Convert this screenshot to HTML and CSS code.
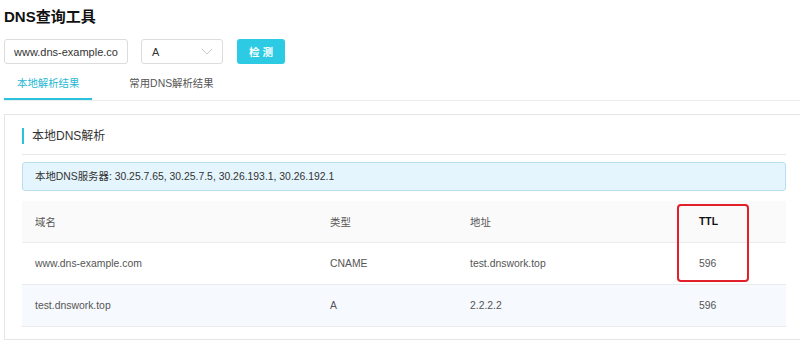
FILE: index.html
```html
<!DOCTYPE html>
<html lang="zh-CN">
<head>
    <meta charset="UTF-8">
    <meta name="viewport" content="width=device-width, initial-scale=1.0">
    <title>DNS查询工具</title>
    <link rel="stylesheet" href="styles.css">
</head>
<body>
    <div class="page">
        <h1 class="title">DNS查询工具</h1>

        <div class="query-bar">
            <input class="domain-input" type="text" value="www.dns-example.com">
            <div class="type-select">
                <span>A</span>
                <svg class="chevron" width="12" height="7" viewBox="0 0 12 7">
                    <path d="M1 1 L6 6 L11 1" fill="none" stroke="#c8c8c8" stroke-width="1"/>
                </svg>
            </div>
            <button class="check-button">检 测</button>
        </div>

        <div class="tabs">
            <div class="tab active">本地解析结果</div>
            <div class="tab">常用DNS解析结果</div>
        </div>

        <div class="card">
            <div class="card-title">本地DNS解析</div>
            <div class="alert">本地DNS服务器: 30.25.7.65, 30.25.7.5, 30.26.193.1, 30.26.192.1</div>

            <div class="table-wrap">
                <table class="result-table">
                    <colgroup>
                        <col class="col-domain">
                        <col class="col-type">
                        <col class="col-addr">
                        <col>
                    </colgroup>
                    <thead>
                        <tr>
                            <th>域名</th>
                            <th>类型</th>
                            <th>地址</th>
                            <th class="ttl-head">TTL</th>
                        </tr>
                    </thead>
                    <tbody>
                        <tr>
                            <td>www.dns-example.com</td>
                            <td>CNAME</td>
                            <td>test.dnswork.top</td>
                            <td>596</td>
                        </tr>
                        <tr class="hover">
                            <td>test.dnswork.top</td>
                            <td>A</td>
                            <td>2.2.2.2</td>
                            <td>596</td>
                        </tr>
                    </tbody>
                </table>
                <div class="highlight"></div>
            </div>
        </div>
    </div>
</body>
</html>
```

FILE: styles.css
```css
body {
    margin: 0;
    padding: 0;
    font-family: "Liberation Sans", "Noto Sans CJK SC", sans-serif;
    font-size: 10.4px;
    color: #444;
    background: #fff;
    overflow: hidden;
}

.page {
    padding: 0 0 0 4px;
}

.title {
    margin: 0;
    padding-top: 7px;
    height: 32px;
    font-size: 15px;
    font-weight: 600;
    line-height: 20px;
    color: #111;
}

.query-bar {
    display: flex;
    align-items: center;
    height: 25px;
}

.domain-input {
    box-sizing: border-box;
    width: 124px;
    height: 25px;
    padding: 0 9px;
    border: 1px solid #dcdcdc;
    border-radius: 3px;
    font-family: inherit;
    font-size: 11px;
    color: #333;
    outline: none;
}

.type-select {
    box-sizing: border-box;
    display: flex;
    align-items: center;
    justify-content: space-between;
    width: 82px;
    height: 25px;
    margin-left: 13px;
    padding: 0 9px 0 10px;
    border: 1px solid #dcdcdc;
    border-radius: 3px;
    font-size: 11px;
    color: #333;
}

.check-button {
    width: 48px;
    height: 25px;
    margin-left: 14px;
    border: none;
    border-radius: 3px;
    background: #2ccbe3;
    color: #fff;
    font-family: inherit;
    font-size: 10.5px;
    font-weight: bold;
    cursor: pointer;
}

.tabs {
    display: flex;
    margin-top: 9px;
    border-bottom: 1px solid #ececec;
}

.tab {
    padding: 0 13px;
    height: 27px;
    line-height: 22px;
    color: #555;
    margin-right: 24px;
}

.tab.active {
    color: #1fb8d3;
    border-bottom: 2px solid #2bc3dc;
    height: 25px;
}

.card {
    box-sizing: border-box;
    width: 800px;
    margin-top: 13px;
    padding: 13px 17px 12px;
    border: 1px solid #e6e6e6;
}

.card-title {
    height: 16px;
    line-height: 16px;
    padding-left: 8px;
    border-left: 2px solid #2bc3dc;
    font-size: 12px;
    color: #333;
}

.card-title::after {
    content: "";
    display: block;
    height: 1px;
    margin: 10px 0 0 -10px;
    background: #e8e8e8;
}

.alert {
    box-sizing: border-box;
    height: 29px;
    margin-top: 18px;
    padding: 0 12px;
    line-height: 27px;
    border: 1px solid #b8def0;
    border-radius: 3px;
    background: #e4f5fd;
    color: #333;
}

.table-wrap {
    position: relative;
    margin-top: 10px;
}

.result-table {
    width: 100%;
    border-collapse: collapse;
    table-layout: fixed;
}

.col-domain {
    width: 295px;
}

.col-type {
    width: 140px;
}

.col-addr {
    width: 229px;
}

.result-table th,
.result-table td {
    height: 41px;
    padding: 0 13px;
    text-align: left;
    border-bottom: 1px solid #ebebeb;
    color: #555;
    font-weight: normal;
}

.result-table thead tr {
    background: #fafafa;
}

.result-table th.ttl-head {
    font-weight: bold;
    color: #111;
}

.result-table tr.hover {
    background: #f6f9fd;
}

.highlight {
    position: absolute;
    left: 655px;
    top: 3px;
    width: 68px;
    height: 74px;
    border: 2px solid #e2202a;
    border-radius: 4px;
}
```
